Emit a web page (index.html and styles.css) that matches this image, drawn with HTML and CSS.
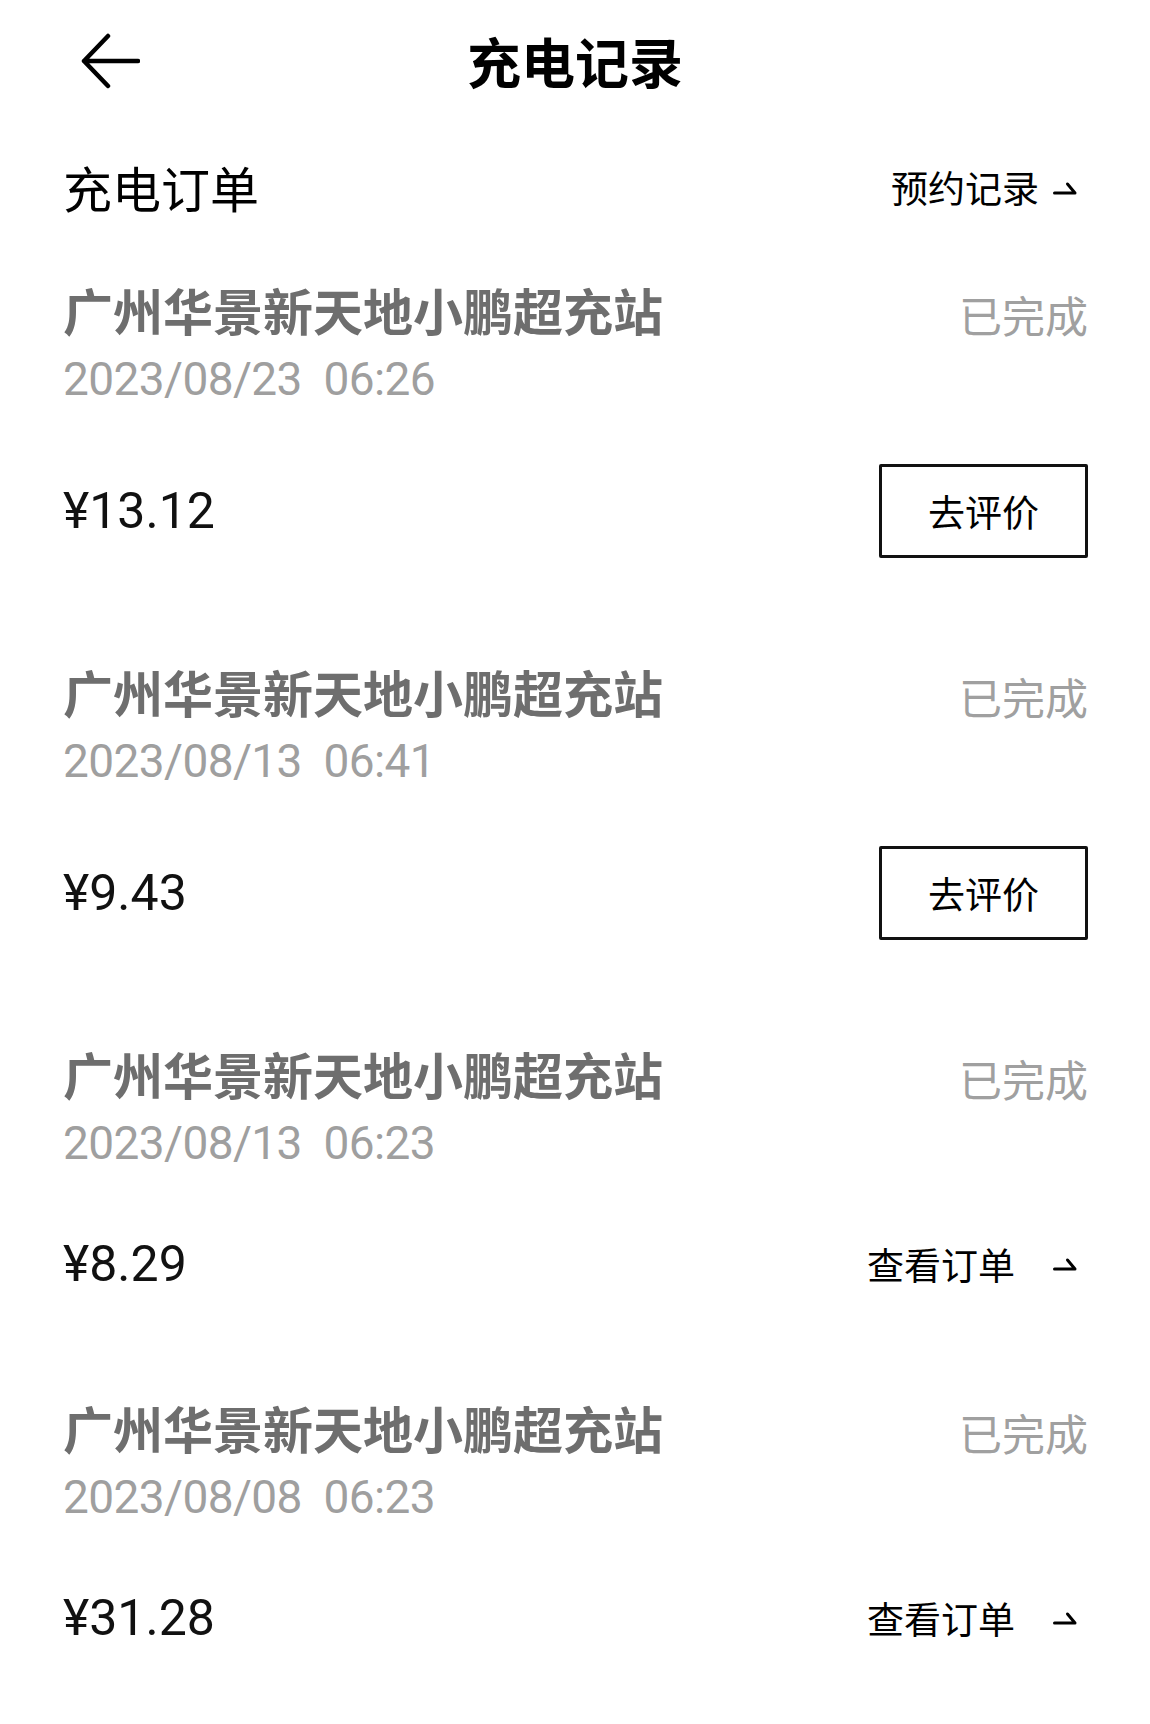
FILE: index.html
```html
<!DOCTYPE html>
<html lang="zh-CN">
<head>
<meta charset="utf-8">
<title>充电记录</title>
<link rel="stylesheet" href="styles.css">
</head>
<body>
<div class="page">
  <header class="topbar">
    <button class="back" aria-label="返回">
      <svg width="60" height="56" viewBox="0 0 60 56"><path d="M28 3 L4 28 L28 53 M4 28 L58 28" fill="none" stroke="#000" stroke-width="4.5" stroke-linecap="round" stroke-linejoin="round"/></svg>
    </button>
    <h1 class="title">充电记录</h1>
    <span class="spacer"></span>
  </header>

  <div class="section-head">
    <h2 class="section-title">充电订单</h2>
    <a class="link link-tight">预约记录<svg class="harpoon" width="24" height="14" viewBox="0 0 24 14"><path d="M1.5 12 L22 12 L14.5 3" fill="none" stroke="#000" stroke-width="3" stroke-linecap="round" stroke-linejoin="round"/></svg></a>
  </div>

  <div class="orders">
    <div class="order">
      <div class="order-top">
        <div class="station">广州华景新天地小鹏超充站</div>
        <div class="status">已完成</div>
      </div>
      <div class="date">2023/08/23&nbsp; 06:26</div>
      <div class="order-bottom">
        <div class="price">¥13.12</div>
        <button class="btn">去评价</button>
      </div>
    </div>

    <div class="order">
      <div class="order-top">
        <div class="station">广州华景新天地小鹏超充站</div>
        <div class="status">已完成</div>
      </div>
      <div class="date">2023/08/13&nbsp; 06:41</div>
      <div class="order-bottom">
        <div class="price">¥9.43</div>
        <button class="btn">去评价</button>
      </div>
    </div>

    <div class="order">
      <div class="order-top">
        <div class="station">广州华景新天地小鹏超充站</div>
        <div class="status">已完成</div>
      </div>
      <div class="date">2023/08/13&nbsp; 06:23</div>
      <div class="order-bottom short">
        <div class="price">¥8.29</div>
        <a class="link link-wide">查看订单<svg class="harpoon" width="24" height="14" viewBox="0 0 24 14"><path d="M1.5 12 L22 12 L14.5 3" fill="none" stroke="#000" stroke-width="3" stroke-linecap="round" stroke-linejoin="round"/></svg></a>
      </div>
    </div>

    <div class="order">
      <div class="order-top">
        <div class="station">广州华景新天地小鹏超充站</div>
        <div class="status">已完成</div>
      </div>
      <div class="date">2023/08/08&nbsp; 06:23</div>
      <div class="order-bottom short">
        <div class="price">¥31.28</div>
        <a class="link link-wide">查看订单<svg class="harpoon" width="24" height="14" viewBox="0 0 24 14"><path d="M1.5 12 L22 12 L14.5 3" fill="none" stroke="#000" stroke-width="3" stroke-linecap="round" stroke-linejoin="round"/></svg></a>
      </div>
    </div>
  </div>
</div>
</body>
</html>
```

FILE: styles.css
```css
* { box-sizing: border-box; }

html, body {
  margin: 0;
  padding: 0;
  background: #fff;
}

body {
  font-family: "Roboto", "Noto Sans CJK SC", sans-serif;
  color: #000;
}

.page {
  width: 1150px;
  min-height: 1724px;
}

.topbar {
  height: 122px;
  display: grid;
  grid-template-columns: 1fr auto 1fr;
  align-items: center;
  padding: 0 80px;
}

.back {
  justify-self: start;
  border: 0;
  background: none;
  padding: 0;
  margin: 0;
  width: 60px;
  height: 56px;
  display: flex;
}

.title {
  margin: 0;
  font-family: "Noto Sans CJK SC", sans-serif;
  font-size: 54px;
  font-weight: 700;
  line-height: 60px;
  color: #000;
}

.section-head {
  height: 130px;
  display: flex;
  align-items: center;
  justify-content: space-between;
  padding: 0 73px 0 63px;
}

.section-title {
  margin: 0;
  font-family: "Noto Sans CJK SC", sans-serif;
  font-size: 49px;
  font-weight: 400;
  line-height: 60px;
  color: #000;
}

.link {
  display: flex;
  align-items: center;
  font-family: "Noto Sans CJK SC", sans-serif;
  font-size: 37px;
  line-height: 50px;
  color: #000;
}

.link-tight .harpoon { margin-left: 14px; margin-top: 2px; }
.link-wide .harpoon { margin-left: 38px; margin-top: 0; }

.orders {
  margin-top: 27px;
  display: flex;
  flex-direction: column;
  gap: 103px;
  padding: 0 62px 0 63px;
}

.order-top {
  display: flex;
  justify-content: space-between;
  align-items: flex-start;
}

.station {
  font-family: "Noto Sans CJK SC", sans-serif;
  font-size: 50px;
  font-weight: 700;
  line-height: 60px;
  color: #6e6e6e;
}

.status {
  margin-top: 5px;
  font-family: "Noto Sans CJK SC", sans-serif;
  font-size: 43px;
  line-height: 60px;
  color: #a0a0a0;
}

.date {
  margin-top: 10px;
  font-family: "Roboto", sans-serif;
  font-size: 46px;
  line-height: 50px;
  letter-spacing: -0.6px;
  color: #9f9f9f;
}

.order-bottom {
  margin-top: 60px;
  height: 94px;
  display: flex;
  justify-content: space-between;
  align-items: center;
}

.order-bottom.short {
  margin-top: 66px;
  height: 60px;
}

.order-bottom.short .link {
  padding-right: 11px;
}

.price {
  font-family: "Roboto", sans-serif;
  font-size: 50px;
  line-height: 60px;
  color: #111;
}

.btn {
  width: 209px;
  height: 94px;
  border: 3px solid #111;
  border-radius: 2px;
  background: #fff;
  font-family: "Noto Sans CJK SC", sans-serif;
  font-size: 37px;
  line-height: 50px;
  color: #000;
  padding: 0;
  display: flex;
  align-items: center;
  justify-content: center;
}
```
